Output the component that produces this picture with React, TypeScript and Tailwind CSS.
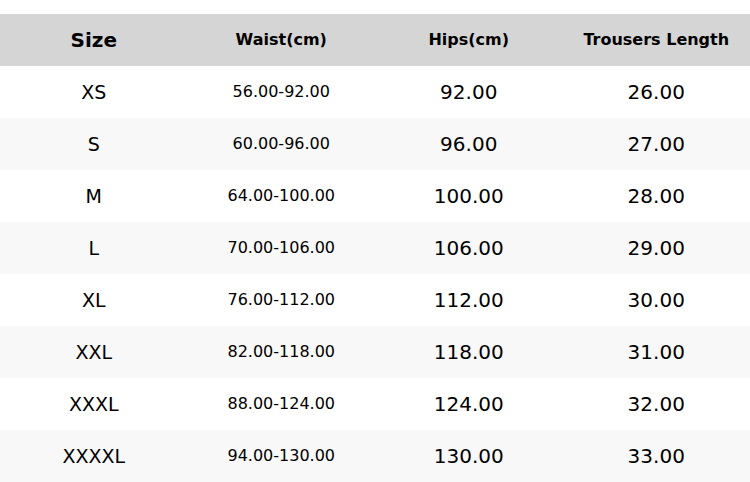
import React from 'react';

const rows = [
  { size: 'XS', waist: '56.00-92.00', hips: '92.00', length: '26.00' },
  { size: 'S', waist: '60.00-96.00', hips: '96.00', length: '27.00' },
  { size: 'M', waist: '64.00-100.00', hips: '100.00', length: '28.00' },
  { size: 'L', waist: '70.00-106.00', hips: '106.00', length: '29.00' },
  { size: 'XL', waist: '76.00-112.00', hips: '112.00', length: '30.00' },
  { size: 'XXL', waist: '82.00-118.00', hips: '118.00', length: '31.00' },
  { size: 'XXXL', waist: '88.00-124.00', hips: '124.00', length: '32.00' },
  { size: 'XXXXL', waist: '94.00-130.00', hips: '130.00', length: '33.00' },
];

const App: React.FC = () => {
  return (
    <div
      className="w-[750px] h-[482px] bg-white pt-[14px] text-black"
      style={{ fontFamily: '"DejaVu Sans", sans-serif' }}
    >
      <div className="grid grid-cols-4 h-[52px] items-center bg-[#d5d5d5] font-bold text-center">
        <div className="text-[20px]">Size</div>
        <div className="text-[16px]">Waist(cm)</div>
        <div className="text-[16px]">Hips(cm)</div>
        <div className="text-[16px]">Trousers Length</div>
      </div>
      {rows.map((row, index) => (
        <div
          key={row.size}
          className={`grid grid-cols-4 h-[52px] items-center text-center ${index % 2 === 1 ? 'bg-[#f8f8f8]' : 'bg-white'}`}
        >
          <div className="text-[19px]">{row.size}</div>
          <div className="text-[16px]">{row.waist}</div>
          <div className="text-[20px]">{row.hips}</div>
          <div className="text-[20px]">{row.length}</div>
        </div>
      ))}
    </div>
  );
};

export default App;
